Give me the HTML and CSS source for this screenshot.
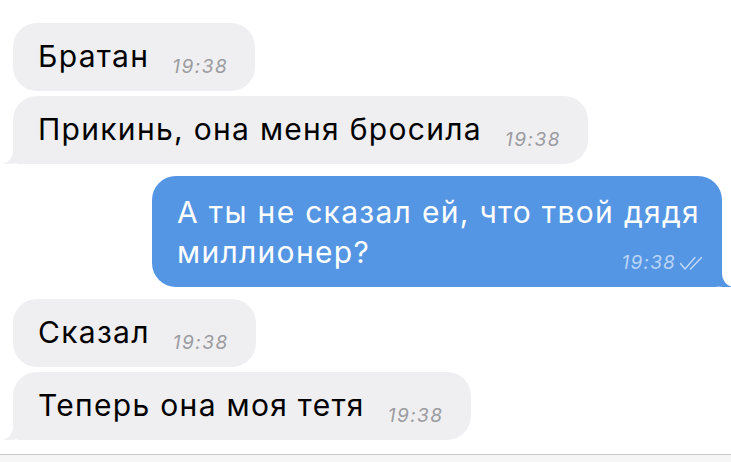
FILE: index.html
```html
<!DOCTYPE html>
<html lang="ru">
<head>
    <meta charset="utf-8">
    <title>Чат</title>
    <link rel="stylesheet" href="styles.css">
</head>
<body>
    <div class="chat">
        <div class="bubble in">
            <span class="text">Братан</span><span class="time">19:38</span>
        </div>
        <div class="bubble in tail">
            <span class="text">Прикинь, она меня бросила</span><span class="time">19:38</span>
        </div>

        <div class="bubble out tail">
            <div class="line">А ты не сказал ей, что твой дядя</div>
            <div class="line last">
                <span class="text">миллионер?</span>
                <span class="time">19:38<svg class="checks" width="26" height="14" viewBox="0 0 26 14"><path d="M1.5 7.5 L6 13 L16 1.5" /><path d="M11.5 13 L22.5 1.5" /></svg></span>
            </div>
        </div>

        <div class="bubble in">
            <span class="text">Сказал</span><span class="time">19:38</span>
        </div>
        <div class="bubble in tail">
            <span class="text">Теперь она моя тетя</span><span class="time">19:38</span>
        </div>
    </div>

    <div class="composer"></div>
</body>
</html>
```

FILE: styles.css
```css
body {
    margin: 0;
    padding: 0;
    background-color: #fff;
    font-family: Inter, "Noto Sans", sans-serif;
    height: 462px;
    overflow: hidden;
    display: flex;
    flex-direction: column;
}

.chat {
    flex: 1;
    display: flex;
    flex-direction: column;
    align-items: flex-start;
    padding: 23px 9px 0 13px;
    gap: 5px;
}

.bubble {
    position: relative;
    box-sizing: border-box;
    height: 68px;
    padding: 15px 27px 0 25px;
    border-radius: 24px;
    font-size: 30px;
    line-height: 36px;
    letter-spacing: 1.3px;
    white-space: nowrap;
}

.bubble.in {
    background-color: #efeff1;
    color: #000;
}

.bubble.tail + .bubble {
    margin-top: 7px;
}

.bubble.out {
    align-self: flex-end;
    width: 570px;
    height: 111px;
    padding: 16px 17px 0 25px;
    background-color: #5495e4;
    color: #fff;
    line-height: 40px;
}

.line.last {
    display: flex;
    align-items: flex-end;
    justify-content: space-between;
}

.time {
    margin-left: 23px;
    font-size: 19px;
    line-height: 0;
    letter-spacing: 1.5px;
    font-style: italic;
    color: #9b9ba0;
    vertical-align: -6px;
}

.out .time {
    line-height: 19px;
    letter-spacing: 1.2px;
    color: #b9d4f6;
}

.checks {
    margin-left: 3px;
    vertical-align: -1px;
    fill: none;
    stroke: #c2daf7;
    stroke-width: 1.4;
    stroke-linecap: round;
    stroke-linejoin: round;
}

/* bubble tails */
.tail.in {
    border-bottom-left-radius: 6px;
}

.tail.in::before {
    content: "";
    position: absolute;
    bottom: 0;
    left: -11px;
    width: 24px;
    height: 22px;
    background-color: #efeff1;
    border-bottom-right-radius: 16px 14px;
}

.tail.in::after {
    content: "";
    position: absolute;
    bottom: 0;
    left: -20px;
    width: 20px;
    height: 24px;
    background-color: #fff;
    border-bottom-right-radius: 12px 14px;
}

.tail.out {
    border-bottom-right-radius: 6px;
}

.tail.out::before {
    content: "";
    position: absolute;
    bottom: 0;
    right: -9px;
    width: 24px;
    height: 22px;
    background-color: #5495e4;
    border-bottom-left-radius: 16px 14px;
}

.tail.out::after {
    content: "";
    position: absolute;
    bottom: 0;
    right: -20px;
    width: 20px;
    height: 24px;
    background-color: #fff;
    border-bottom-left-radius: 12px 14px;
}

.composer {
    height: 7px;
    border-top: 1px solid #c9c9cb;
    background-color: #f6f6f7;
}
```
